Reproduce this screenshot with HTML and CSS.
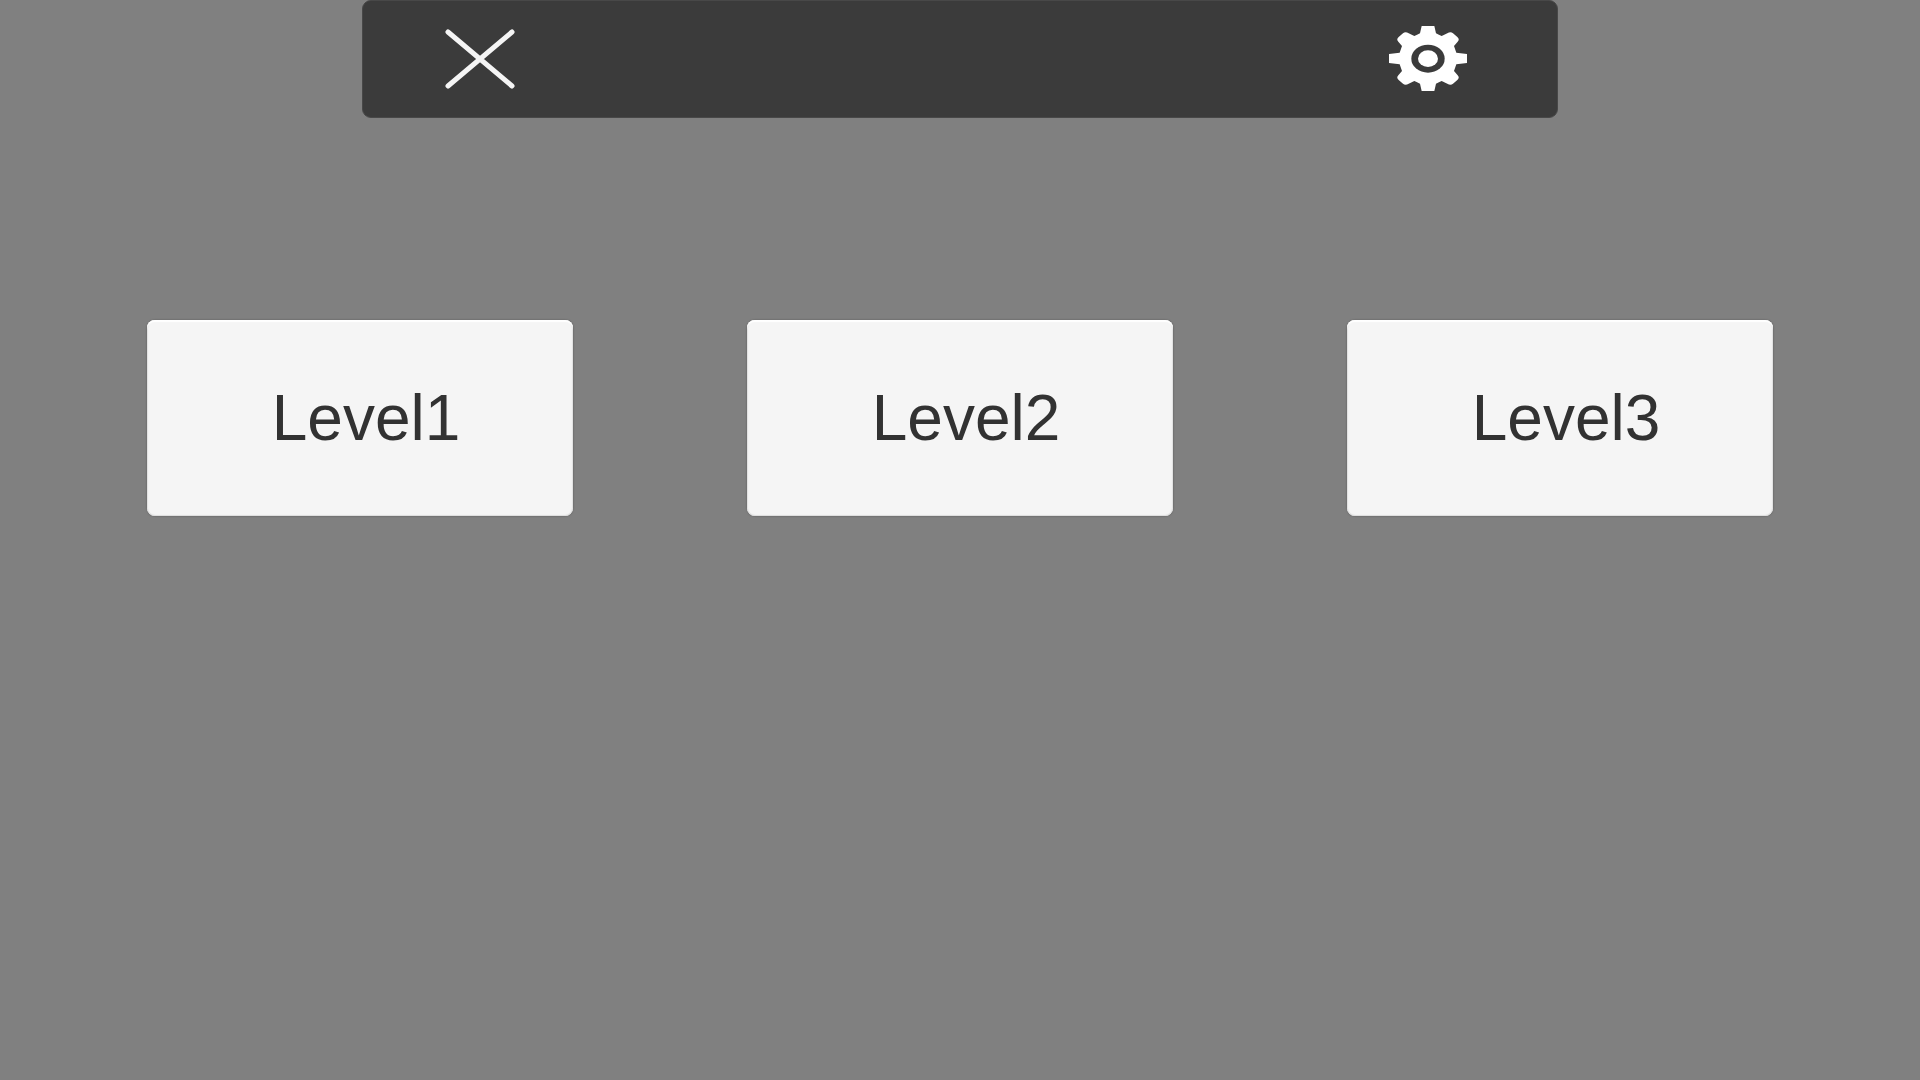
FILE: index.html
```html
<!DOCTYPE html>
<html lang="en">
<head>
  <meta charset="utf-8">
  <meta name="viewport" content="width=device-width, initial-scale=1">
  <title>Level select</title>
  <link rel="stylesheet" href="styles.css">
</head>
<body>
  <header class="toolbar">
    <button class="icon-button" type="button" aria-label="Close">
      <svg class="icon-close" viewBox="0 0 70 60" aria-hidden="true">
        <path d="M3 3 67 57M67 3 3 57"/>
      </svg>
    </button>
    <button class="icon-button" type="button" aria-label="Settings">
      <svg class="icon-gear" viewBox="0 0 234 195" aria-hidden="true">
        <path class="gear-body" d="M98 0H136L141 22Q150 27 158 30L175 22Q185 16 192 22L205 33Q213 40 206 47L195 60L202 80L234 84V111L202 115L195 135L206 148Q213 155 205 162L192 173Q185 179 175 173L158 165Q150 168 141 173L136 195H98L93 173Q84 168 76 165L59 173Q49 179 42 173L29 162Q21 155 28 148L39 135L32 115L0 111V84L32 80L39 60L28 47Q21 40 29 33L42 22Q49 16 59 22L76 30Q84 27 93 22Z"/>
        <ellipse class="gear-ring" cx="117" cy="98" rx="50" ry="42"/>
        <ellipse class="gear-body" cx="117" cy="98" rx="30" ry="25"/>
      </svg>
    </button>
  </header>
  <main class="levels">
    <button class="level" type="button">Level1</button>
    <button class="level" type="button">Level2</button>
    <button class="level" type="button">Level3</button>
  </main>
</body>
</html>
```
FILE: styles.css
```css
* {
  box-sizing: border-box;
}

body {
  margin: 0;
  min-height: 100vh;
  background: #808080;
  font-family: "Liberation Sans", Arial, sans-serif;
}

button {
  border: 0;
  padding: 0;
  font: inherit;
  cursor: pointer;
}

.toolbar {
  display: flex;
  align-items: center;
  justify-content: space-between;
  width: 62.3%;
  margin: 0 auto;
  padding: 25px 90px 26px 82px;
  background: #3b3b3b;
  border: 1px solid #484848;
  border-radius: 9px;
}

.icon-button {
  display: flex;
  background: none;
}

.icon-close {
  width: 70px;
  height: 60px;
  fill: none;
  stroke: #f5f5f5;
  stroke-width: 5;
  stroke-linecap: round;
}

.icon-gear {
  width: 78px;
  height: 65px;
}

.gear-body {
  fill: #fff;
}

.gear-ring {
  fill: #3b3b3b;
}

.levels {
  display: grid;
  grid-template-columns: repeat(3, 1fr);
  justify-items: center;
  padding: 202px 60px 60px;
}

.level {
  width: 71%;
  padding: 63px 0 63px 12px;
  background: #f5f5f5;
  border-radius: 8px;
  box-shadow: inset 0 2px 1px #fff, inset 0 0 1px 1px #ddd, 0 0 2px #555;
  color: #323232;
  font-size: 64px;
  line-height: 70px;
}
```
